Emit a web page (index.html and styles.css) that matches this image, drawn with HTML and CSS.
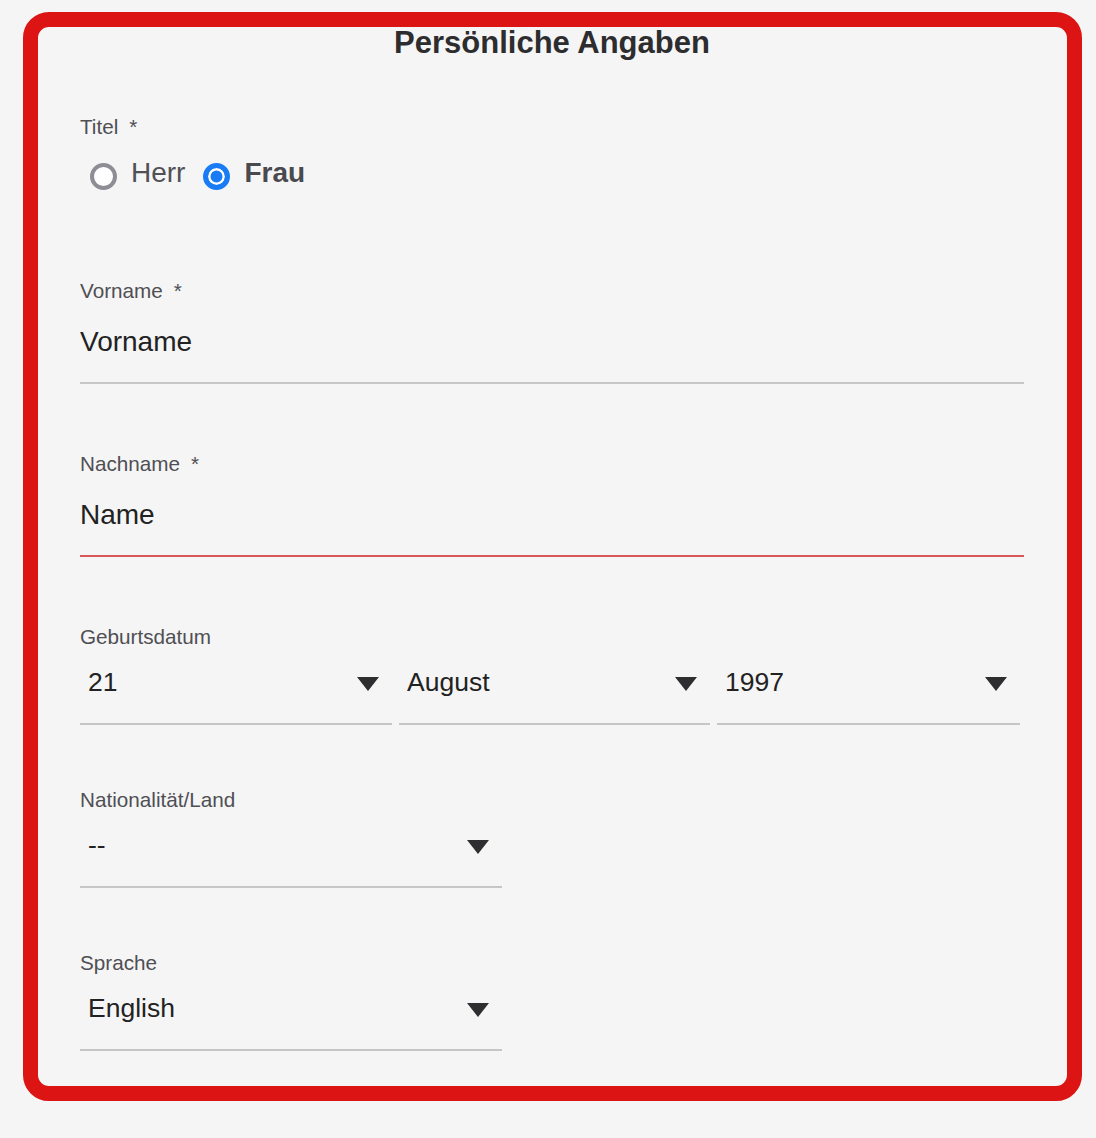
FILE: index.html
```html
<!DOCTYPE html>
<html lang="de">
<head>
  <meta charset="UTF-8">
  <meta name="viewport" content="width=device-width, initial-scale=1.0">
  <title>Persönliche Angaben</title>
  <link rel="stylesheet" href="styles.css">
</head>
<body>
  <form class="personal-box">
    <h1>Persönliche Angaben</h1>

    <div class="field field-radio">
      <label class="field-label">Titel<span class="req">*</span></label>
      <div class="radio-row">
        <label class="radio-option">
          <input type="radio" name="titel" value="herr">
          <span>Herr</span>
        </label>
        <label class="radio-option selected">
          <input type="radio" name="titel" value="frau" checked>
          <span>Frau</span>
        </label>
      </div>
    </div>

    <div class="field field-text">
      <label class="field-label" for="vorname">Vorname<span class="req">*</span></label>
      <input type="text" id="vorname" placeholder="Vorname">
    </div>

    <div class="field field-text">
      <label class="field-label" for="nachname">Nachname<span class="req">*</span></label>
      <input type="text" id="nachname" class="invalid" placeholder="Name">
    </div>

    <div class="field field-select">
      <label class="field-label">Geburtsdatum</label>
      <div class="date-row">
        <div class="select-wrap">
          <select name="tag"><option>21</option></select>
        </div>
        <div class="select-wrap">
          <select name="monat"><option>August</option></select>
        </div>
        <div class="select-wrap">
          <select name="jahr"><option>1997</option></select>
        </div>
      </div>
    </div>

    <div class="field field-select">
      <label class="field-label" for="land">Nationalität/Land</label>
      <div class="select-wrap short">
        <select id="land"><option>--</option></select>
      </div>
    </div>

    <div class="field field-last">
      <label class="field-label" for="sprache">Sprache</label>
      <div class="select-wrap short">
        <select id="sprache"><option>English</option></select>
      </div>
    </div>
  </form>
</body>
</html>
```

FILE: styles.css
```css
body {
  margin: 0;
  background-color: #f5f5f5;
  font-family: "Liberation Sans", Arial, sans-serif;
  color: #222;
}
.personal-box {
  box-sizing: border-box;
  width: 1059px;
  height: 1089px;
  margin: 12px 0 0 23px;
  padding: 0 43px 33px 42px;
  border: 15px solid #dc1414;
  border-radius: 26px;
  display: flex;
  flex-direction: column;
}
h1 {
  margin: 1px 0 58px;
  font-size: 31px;
  line-height: 30px;
  font-weight: bold;
  color: #2d2d2f;
  text-align: center;
}
.field-label {
  display: block;
  font-size: 20.7px;
  line-height: 22px;
  color: #4f4f54;
}
.req {
  margin-left: 11px;
}
.field-radio {
  margin-bottom: 90px;
}
.field-text {
  margin-bottom: 69px;
}
.field-select {
  margin-bottom: 64px;
}
.radio-row {
  display: flex;
  gap: 18px;
  margin-top: 17px;
  padding-left: 10px;
}
.radio-option {
  display: flex;
  align-items: center;
  gap: 14px;
  font-size: 28px;
  line-height: 34px;
  color: #505055;
}
.radio-option.selected {
  font-weight: bold;
  color: #49494e;
}
.radio-option input {
  appearance: none;
  -webkit-appearance: none;
  box-sizing: border-box;
  width: 27px;
  height: 27px;
  margin: 8px 0 0;
  border: 4px solid #8e8d96;
  border-radius: 50%;
  background: #fff;
}
.radio-option input:checked {
  border: 5px solid #1a7cf5;
  background: #1a7cf5;
  box-shadow: inset 0 0 0 2.5px #fff;
}
.field-text input {
  box-sizing: border-box;
  display: block;
  width: 100%;
  height: 82px;
  padding: 0;
  border: none;
  border-bottom: 2px solid #c6c6c6;
  background: transparent;
  font-family: inherit;
  font-size: 28px;
  color: #222;
  outline: none;
}
.field-text input::placeholder {
  color: #222;
  opacity: 1;
}
.field-text input.invalid {
  border-bottom-color: #d9585c;
}
.date-row {
  display: grid;
  grid-template-columns: 312px 311px 303px;
  gap: 7px;
}
.select-wrap {
  position: relative;
}
.select-wrap.short {
  width: 422px;
}
.select-wrap::after {
  content: "";
  position: absolute;
  right: 13px;
  bottom: 34px;
  border-left: 11.5px solid transparent;
  border-right: 11.5px solid transparent;
  border-top: 14px solid #2e2e30;
  pointer-events: none;
}
select {
  appearance: none;
  -webkit-appearance: none;
  box-sizing: border-box;
  display: block;
  width: 100%;
  height: 77px;
  padding: 0 40px 7px 8px;
  border: none;
  border-bottom: 2px solid #c6c6c6;
  border-radius: 0;
  background: transparent;
  font-family: inherit;
  font-size: 26.5px;
  color: #222;
  outline: none;
}
```
